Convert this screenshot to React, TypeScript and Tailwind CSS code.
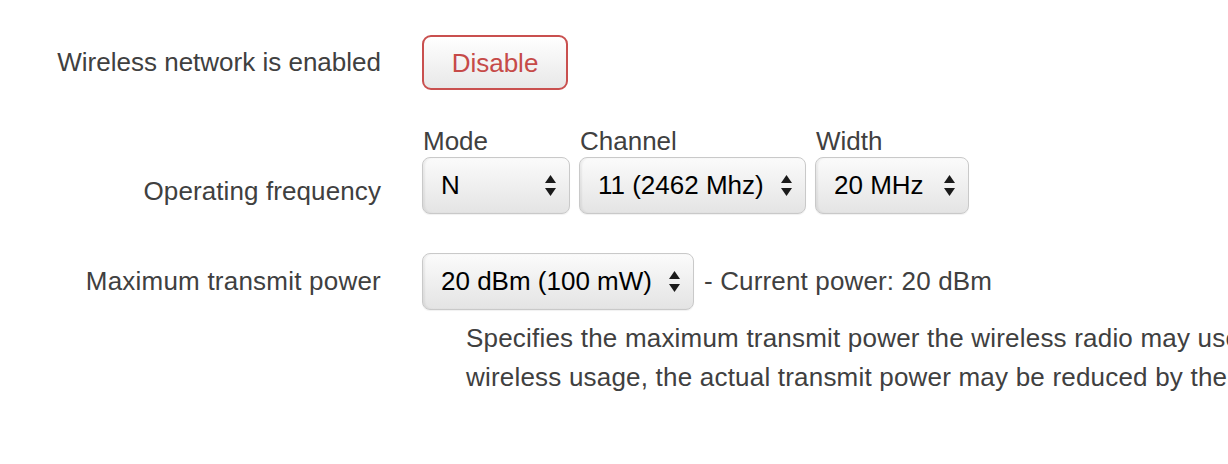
import React from 'react';

const Arrows = () => (
    <svg width="11" height="21" viewBox="0 0 11 21" className="shrink-0">
        <path d="M5.5 0 L11 8 L0 8 Z" fill="#1a1a1a" />
        <path d="M0 13 L11 13 L5.5 21 Z" fill="#1a1a1a" />
    </svg>
);

const Select = ({ value, width }: { value: string; width: string }) => (
    <div
        className={`${width} h-[57px] flex items-center justify-between pl-[18px] pr-[13px] border border-[#c9c9c9] rounded-[8px] bg-linear-to-b from-[#fbfbfb] to-[#e4e4e4] shadow-[inset_2px_0_2px_rgba(0,0,0,0.06),0_1px_1px_rgba(0,0,0,0.06)] text-black`}
    >
        <span className="whitespace-nowrap">{value}</span>
        <Arrows />
    </div>
);

const App: React.FC = () => {
    return (
        <div
            className="w-[1228px] h-[464px] overflow-hidden bg-white text-[26px] text-[#404040] pt-[35px]"
            style={{ fontFamily: '"Liberation Sans", Arial, sans-serif' }}
        >
            {/* enabled row */}
            <div className="flex items-center">
                <div className="w-[381px] text-right whitespace-nowrap">Wireless network is enabled</div>
                <button className="ml-[41px] w-[146px] h-[55px] border-2 border-[#c9504f] rounded-[9px] bg-linear-to-b from-white to-[#e8e8e8] text-[#c64a48] leading-none">
                    Disable
                </button>
            </div>

            {/* frequency row */}
            <div className="flex mt-[37px]">
                <div className="w-[381px] text-right whitespace-nowrap pt-[50px] leading-[28px] tracking-[0.1px]">Operating frequency</div>
                <div className="ml-[41px] flex gap-[9px]">
                    <div className="flex flex-col gap-[2px]">
                        <span className="leading-[28px] pl-px">Mode</span>
                        <Select value="N" width="w-[148px]" />
                    </div>
                    <div className="flex flex-col gap-[2px]">
                        <span className="leading-[28px] pl-px">Channel</span>
                        <Select value="11 (2462 Mhz)" width="w-[227px]" />
                    </div>
                    <div className="flex flex-col gap-[2px]">
                        <span className="leading-[28px] pl-px">Width</span>
                        <Select value="20 MHz" width="w-[154px]" />
                    </div>
                </div>
            </div>

            {/* power row */}
            <div className="flex items-center mt-[39px]">
                <div className="w-[381px] text-right whitespace-nowrap tracking-[0.22px]">Maximum transmit power</div>
                <div className="ml-[41px] flex items-center gap-[10px]">
                    <Select value="20 dBm (100 mW)" width="w-[272px]" />
                    <span className="whitespace-nowrap tracking-[0.15px]">- Current power: 20 dBm</span>
                </div>
            </div>
            <div className="ml-[466px] mt-[9px] leading-[39px] whitespace-nowrap tracking-[0.2px]">
                Specifies the maximum transmit power the wireless radio may use. Depending on regulatory requirements and
                <br />
                wireless usage, the actual transmit power may be reduced by the driver.
            </div>
        </div>
    );
};

export default App;
